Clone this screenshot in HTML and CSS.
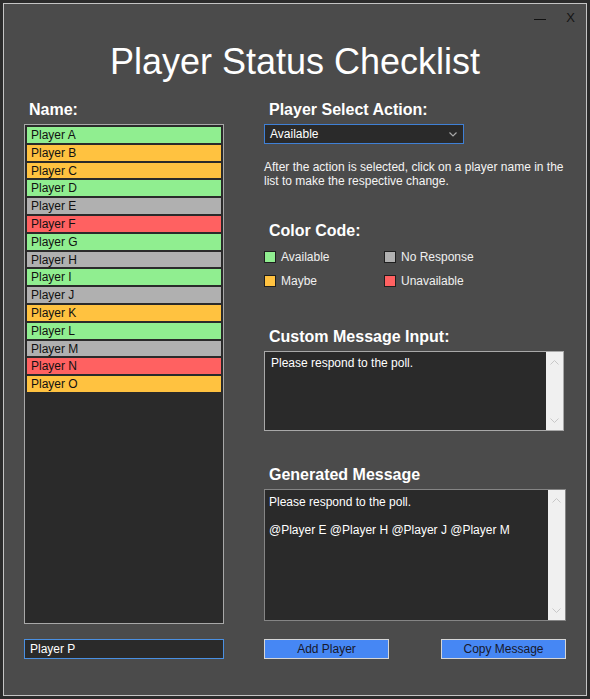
FILE: index.html
```html
<!DOCTYPE html>
<html lang="en">
<head>
<meta charset="utf-8">
<title>Player Status Checklist</title>
<link rel="stylesheet" href="styles.css">
</head>
<body>
<div class="window">
  <div class="titlebar">
    <span class="minimize"></span>
    <span class="close">X</span>
  </div>
  <h1 class="title">Player Status Checklist</h1>
  <div class="layout">
    <div class="col-left">
      <div class="label">Name:</div>
      <div class="listbox">
        <div class="row green">Player A</div>
        <div class="row orange">Player B</div>
        <div class="row orange">Player C</div>
        <div class="row green">Player D</div>
        <div class="row gray">Player E</div>
        <div class="row red">Player F</div>
        <div class="row green">Player G</div>
        <div class="row gray">Player H</div>
        <div class="row green">Player I</div>
        <div class="row gray">Player J</div>
        <div class="row orange">Player K</div>
        <div class="row green">Player L</div>
        <div class="row gray">Player M</div>
        <div class="row red">Player N</div>
        <div class="row orange">Player O</div>
      </div>
    </div>
    <div class="col-right">
      <div class="label">Player Select Action:</div>
      <div class="select">
        <span>Available</span>
        <svg class="chev" width="8" height="5" viewBox="0 0 8 5"><path d="M0.5 0.5 L4 4 L7.5 0.5" fill="none" stroke="#a8a8a8" stroke-width="1.2"/></svg>
      </div>
      <p class="desc">After the action is selected, click on a player name in the list to make the respective change.</p>
      <div class="label label-color">Color Code:</div>
      <div class="legend">
        <div class="legend-item"><span class="swatch green"></span>Available</div>
        <div class="legend-item"><span class="swatch gray"></span>No Response</div>
        <div class="legend-item"><span class="swatch orange"></span>Maybe</div>
        <div class="legend-item"><span class="swatch red"></span>Unavailable</div>
      </div>
      <div class="label label-custom">Custom Message Input:</div>
      <div class="textbox textbox-input">
        <div class="textbox-content">Please respond to the poll.</div>
        <div class="scrollbar">
          <svg width="9" height="5" viewBox="0 0 9 5"><path d="M0.5 4.5 L4.5 0.5 L8.5 4.5" fill="none" stroke="#c8c8c8" stroke-width="1"/></svg>
          <svg width="9" height="5" viewBox="0 0 9 5"><path d="M0.5 0.5 L4.5 4.5 L8.5 0.5" fill="none" stroke="#c8c8c8" stroke-width="1"/></svg>
        </div>
      </div>
      <div class="label label-generated">Generated Message</div>
      <div class="textbox textbox-output">
        <div class="textbox-content">Please respond to the poll.<br><br>@Player E @Player H @Player J @Player M</div>
        <div class="scrollbar">
          <svg width="9" height="5" viewBox="0 0 9 5"><path d="M0.5 4.5 L4.5 0.5 L8.5 4.5" fill="none" stroke="#c8c8c8" stroke-width="1"/></svg>
          <svg width="9" height="5" viewBox="0 0 9 5"><path d="M0.5 0.5 L4.5 4.5 L8.5 0.5" fill="none" stroke="#c8c8c8" stroke-width="1"/></svg>
        </div>
      </div>
    </div>
    <div class="entry">Player P</div>
    <div class="buttons">
      <div class="button">Add Player</div>
      <div class="button">Copy Message</div>
    </div>
  </div>
</div>
</body>
</html>
```

FILE: styles.css
```css
* { box-sizing: border-box; }

html, body {
  margin: 0;
  padding: 0;
  background: #2b2b2b;
  font-family: "Liberation Sans", Arial, sans-serif;
}

.window {
  margin: 3px;
  width: 584px;
  height: 693px;
  border: 1px solid #c4c4c4;
  background: #4b4b4b;
}

.titlebar {
  height: 28px;
  display: flex;
  justify-content: flex-end;
  align-items: center;
  padding-right: 11px;
}

.minimize {
  width: 12px;
  height: 1px;
  background: #111;
  margin-top: 2px;
  margin-right: 20px;
}

.close {
  font-size: 13px;
  color: #151515;
  line-height: 14px;
}

.title {
  margin: 10px 0 0 0;
  font-size: 36px;
  font-weight: normal;
  line-height: 40px;
  text-align: center;
  color: #ffffff;
}

.layout {
  margin-top: 18px;
  padding-left: 20px;
  display: grid;
  grid-template-columns: 200px 302px;
  grid-template-rows: 524px 20px;
  column-gap: 40px;
  row-gap: 15px;
}

.label {
  font-size: 16px;
  font-weight: bold;
  line-height: 20px;
  height: 20px;
  color: #ffffff;
  padding-left: 5px;
}

.listbox {
  margin-top: 4px;
  height: 500px;
  border: 1px solid #a8a8a8;
  background: #2a2a2a;
  padding: 2px;
  display: flex;
  flex-direction: column;
  gap: 2px;
}

.row {
  height: 15.8px;
  font-size: 12px;
  line-height: 16px;
  color: #111;
  padding-left: 4px;
}

.green { background: #90ee90; }
.orange { background: #ffc240; }
.gray { background: #b0b0b0; }
.red { background: #ff6161; }

.select {
  margin-top: 4px;
  width: 200px;
  height: 20px;
  border: 1px solid #3f80d6;
  background: #2a2a2a;
  display: flex;
  align-items: center;
  justify-content: space-between;
  padding: 0 6px 0 5px;
  font-size: 12px;
  color: #ffffff;
}

.chev { margin-top: 1px; }

.desc {
  margin: 15.5px 0 0 0;
  font-size: 12px;
  line-height: 14px;
  color: #f4f4f4;
  width: 302px;
}

.label-color { margin-top: 33px; }

.legend {
  margin-top: 10.5px;
  display: grid;
  grid-template-columns: 120px 120px;
  row-gap: 12px;
}

.legend-item {
  display: flex;
  align-items: center;
  height: 12px;
  font-size: 12px;
  color: #f0f0f0;
}

.swatch {
  width: 12px;
  height: 12px;
  border: 1px solid #1e1e1e;
  margin-right: 5px;
  flex: none;
}

.label-custom { margin-top: 39.5px; }
.label-generated { margin-top: 33.5px; }

.textbox {
  margin-top: 4.5px;
  display: flex;
  background: #2a2a2a;
  border: 1px solid #a8a8a8;
}

.textbox-input {
  width: 300px;
  height: 80px;
}

.textbox-output {
  width: 302px;
  height: 132px;
  border-color: #858585;
}

.textbox-content {
  flex: 1;
  font-size: 12px;
  line-height: 14px;
  color: #ffffff;
  padding: 4px 6px;
}

.textbox-output .textbox-content { padding: 5px 4px; }

.scrollbar {
  width: 17px;
  background: #f0f0f0;
  display: flex;
  flex-direction: column;
  align-items: center;
  justify-content: space-between;
  padding: 8px 0 7px 0;
}

.entry {
  height: 20px;
  border: 1px solid #4a90e2;
  background: #2a2a2a;
  font-size: 12px;
  line-height: 18px;
  color: #ffffff;
  padding-left: 5px;
}

.buttons {
  display: flex;
  justify-content: space-between;
}

.button {
  width: 125px;
  height: 20px;
  background: #4687f4;
  border: 1px solid #d6d6d6;
  font-size: 12px;
  line-height: 18px;
  text-align: center;
  color: #18182a;
}
```
